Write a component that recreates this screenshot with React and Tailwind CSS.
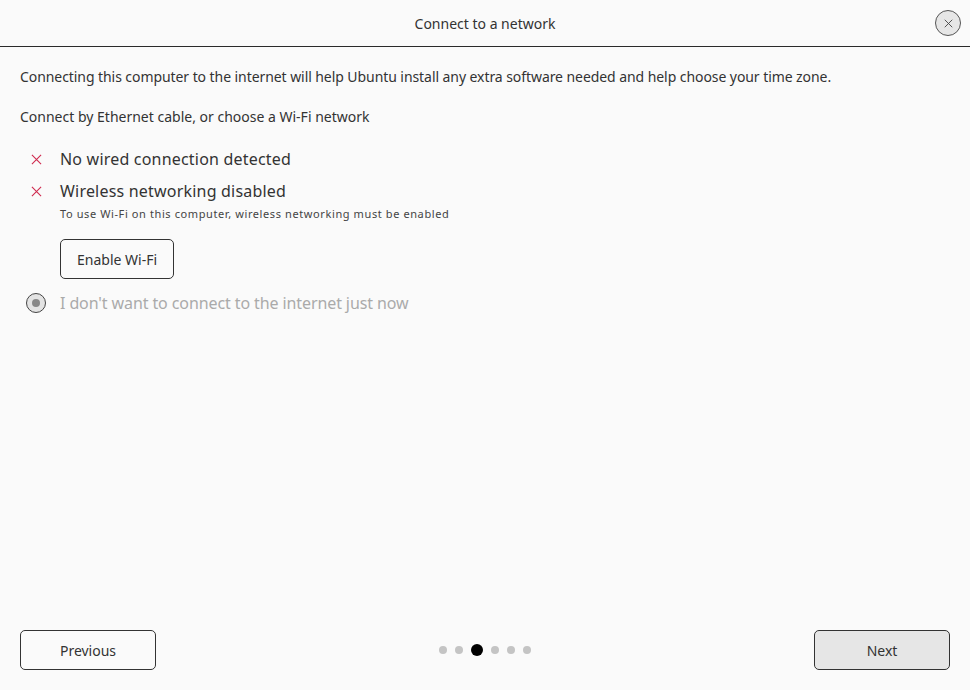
import React from "react";

function XIcon({ className }) {
  return (
    <svg viewBox="0 0 12 12" className={className} fill="none" stroke="currentColor" strokeWidth="1.2">
      <path d="M1 1 L11 11 M11 1 L1 11" />
    </svg>
  );
}

export default function App() {
  const dots = [0, 1, 2, 3, 4, 5];
  return (
    <div
      className="w-[970px] h-[690px] bg-[#fafafa] flex flex-col text-[#333]"
      style={{ fontFamily: '"Noto Sans", "Open Sans", sans-serif' }}
    >
      <header className="h-[47px] shrink-0 flex items-center justify-center relative border-b border-[#2a2a2a]">
        <span className="text-[14px] text-[#333]">Connect to a network</span>
        <button className="absolute right-[9px] top-[10px] w-[26px] h-[26px] rounded-full bg-[#e6e6e6] border border-[#555] flex items-center justify-center">
          <XIcon className="w-[9px] h-[9px] text-[#444]" />
        </button>
      </header>

      <main className="flex-1 flex flex-col px-[20px] pt-[19px]">
        <p className="text-[14px] leading-[22px] text-[#333] tracking-[-0.07px]">
          Connecting this computer to the internet will help Ubuntu install any extra software needed and help choose your time zone.
        </p>
        <p className="text-[14px] leading-[22px] mt-[18px] text-[#333]">
          Connect by Ethernet cable, or choose a Wi-Fi network
        </p>

        <div className="mt-[15px] flex flex-col">
          <div className="flex items-center h-[32px]">
            <div className="w-[40px] flex justify-start pl-[11px]">
              <XIcon className="w-[11px] h-[11px] text-[#cf2b4f]" />
            </div>
            <span className="text-[16px] text-[#333] tracking-[0.2px]">No wired connection detected</span>
          </div>
          <div className="flex items-center h-[32px]">
            <div className="w-[40px] flex justify-start pl-[11px]">
              <XIcon className="w-[11px] h-[11px] text-[#cf2b4f]" />
            </div>
            <span className="text-[16px] text-[#333] tracking-[0.2px]">Wireless networking disabled</span>
          </div>
          <div className="pl-[40px] text-[11px] leading-[14px] text-[#444] tracking-[0.6px]">
            To use Wi-Fi on this computer, wireless networking must be enabled
          </div>
          <div className="pl-[40px] mt-[18px]">
            <button className="h-[40px] px-[16px] rounded-[5px] border border-[#333] text-[14px] text-[#333] bg-transparent">
              Enable Wi-Fi
            </button>
          </div>
          <div className="flex items-center h-[32px] mt-[8px]">
            <div className="w-[40px] flex pl-[6px]">
              <div className="w-[20px] h-[20px] rounded-full border border-[#444] bg-[#e3e3e3] flex items-center justify-center">
                <div className="w-[8px] h-[8px] rounded-full bg-[#888]" />
              </div>
            </div>
            <span className="text-[16px] text-[#aaa] tracking-[-0.1px]">I don't want to connect to the internet just now</span>
          </div>
        </div>
      </main>

      <footer className="h-[80px] shrink-0 flex items-start justify-between px-[20px] pt-[20px]">
        <button className="w-[136px] h-[40px] rounded-[5px] border border-[#333] text-[14px] text-[#333]">
          Previous
        </button>
        <div className="flex items-center gap-[8px] h-[40px]">
          {dots.map((i) =>
            i === 2 ? (
              <div key={i} className="w-[12px] h-[12px] rounded-full bg-black" />
            ) : (
              <div key={i} className="w-[8px] h-[8px] rounded-full bg-[#c4c4c4]" />
            )
          )}
        </div>
        <button className="w-[136px] h-[40px] rounded-[5px] border border-[#333] bg-[#e6e6e6] text-[14px] text-[#333]">
          Next
        </button>
      </footer>
    </div>
  );
}
